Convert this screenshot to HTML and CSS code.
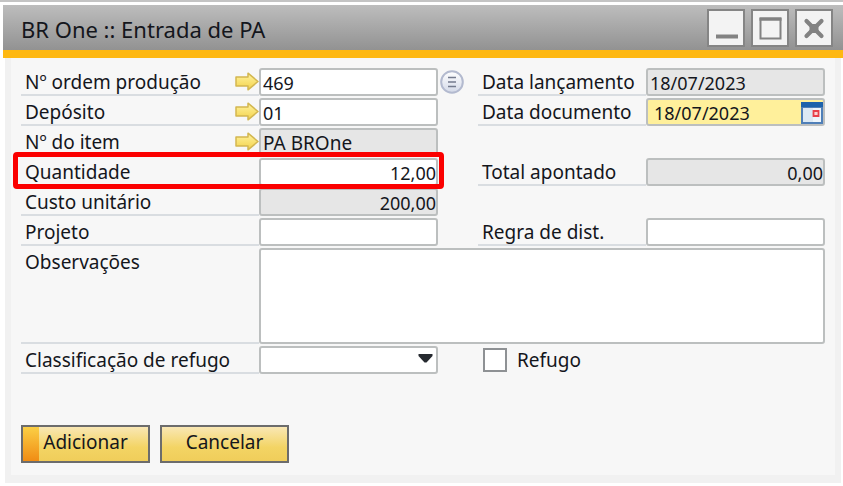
FILE: index.html
```
<!DOCTYPE html>
<html lang="pt-BR">
<head>
<meta charset="utf-8">
<meta name="viewport" content="width=device-width, initial-scale=1">
<title>BR One :: Entrada de PA</title>
<link rel="stylesheet" href="styles.css">
</head>
<body>
<svg class="defs" aria-hidden="true">
  <defs>
    <linearGradient id="gold" x1="0" y1="0" x2="0" y2="1">
      <stop offset="0" stop-color="#fff3a0"/>
      <stop offset="1" stop-color="#f3d24a"/>
    </linearGradient>
    <linearGradient id="disc" x1="0" y1="0" x2="0" y2="1">
      <stop offset="0" stop-color="#ffffff"/>
      <stop offset="1" stop-color="#d3d9e8"/>
    </linearGradient>
    <symbol id="arrow" viewBox="0 0 24 19">
      <path d="M1 5H13V1.200L23 9.500L13 17.800V14H1Z" fill="url(#gold)" stroke="#d3b750" stroke-width="1.500" stroke-linejoin="round"/>
    </symbol>
  </defs>
</svg>
<main class="window">
  <header class="titlebar">
    <h1 class="title">BR One :: Entrada de PA</h1>
    <div class="controls">
      <button class="control" type="button" aria-label="Minimizar"><svg viewBox="0 0 32 32"><path d="M6 24.500H28" stroke="#828282" stroke-width="4"/></svg></button>
      <button class="control" type="button" aria-label="Maximizar"><svg viewBox="0 0 32 32"><path d="M6.500 6V26.500H26.500V6" fill="none" stroke="#828282" stroke-width="2"/><path d="M5.500 7H27.500" stroke="#828282" stroke-width="3.500"/></svg></button>
      <button class="control" type="button" aria-label="Fechar"><svg viewBox="0 0 32 32"><path d="M8.500 9L23.500 24M23.500 9L8.500 24" stroke="#828282" stroke-width="4.200" stroke-linecap="round"/><path d="M11.500 12H20.500V21H11.500Z" fill="#828282"/></svg></button>
    </div>
  </header>
  <form class="panel">
    <div class="grid">
      <div class="label r1"><label for="ordem">Nº ordem produção</label><svg class="arrow" aria-hidden="true"><use href="#arrow"/></svg></div>
      <input class="field r1" id="ordem" type="text" value="469">
      <button class="pick r1" type="button" aria-label="Selecionar ordem"><svg viewBox="0 0 24 24"><circle cx="12" cy="12" r="10.800" fill="url(#disc)" stroke="#b3bacf" stroke-width="2"/><path d="M8 7.500H16M8 12H16M8 16.500H16" stroke="#747b8e" stroke-width="1.300"/></svg></button>
      <label class="label right r1" for="lancamento">Data lançamento</label>
      <input class="field right readonly r1" id="lancamento" type="text" value="18/07/2023" readonly>

      <div class="label r2"><label for="deposito">Depósito</label><svg class="arrow" aria-hidden="true"><use href="#arrow"/></svg></div>
      <input class="field r2" id="deposito" type="text" value="01">
      <label class="label right r2" for="documento">Data documento</label>
      <div class="field right date r2">
        <input class="date-input" id="documento" type="text" value="18/07/2023">
        <button class="calendar" type="button" aria-label="Abrir calendário"><svg viewBox="0 0 22 22"><path d="M0 0H22V22H0Z" fill="#4f7fb8"/><path d="M0 0H22V5H0Z" fill="#1d62ab"/><path d="M2 6H20V20H2Z" fill="#dce9f4"/><path d="M12 6H20V20H12Z" fill="#eef5fb"/><path d="M12.500 9H17.500V14H12.500Z" fill="#fbd3d3" stroke="#e8404a" stroke-width="1.800"/></svg></button>
      </div>

      <div class="label r3"><label for="item">Nº do item</label><svg class="arrow" aria-hidden="true"><use href="#arrow"/></svg></div>
      <input class="field readonly words r3" id="item" type="text" value="PA BROne" readonly>

      <label class="label r4" for="quantidade">Quantidade</label>
      <input class="field number r4" id="quantidade" type="text" value="12,00">
      <label class="label right r4" for="total">Total apontado</label>
      <input class="field right readonly number r4" id="total" type="text" value="0,00" readonly>
      <div class="highlight"></div>

      <label class="label r5" for="custo">Custo unitário</label>
      <input class="field readonly number r5" id="custo" type="text" value="200,00" readonly>

      <label class="label r6" for="projeto">Projeto</label>
      <input class="field r6" id="projeto" type="text">
      <label class="label right r6" for="regra">Regra de dist.</label>
      <input class="field right r6" id="regra" type="text">

      <label class="label r7" for="obs">Observações</label>
      <textarea class="field notes r7" id="obs"></textarea>

      <label class="label r8" for="classificacao">Classificação de refugo</label>
      <div class="select-box r8">
        <select class="field" id="classificacao"><option></option></select>
        <svg class="caret" viewBox="0 0 14 9" aria-hidden="true"><path d="M0 0H14V2L8 8.500H6L0 2Z" fill="#262a30"/></svg>
      </div>
      <label class="check r8"><input class="box" type="checkbox">Refugo</label>
    </div>
    <div class="actions">
      <button class="action primary" type="submit">Adicionar</button>
      <button class="action" type="button">Cancelar</button>
    </div>
  </form>
</main>
</body>
</html>
```
FILE: styles.css
```
* {
  box-sizing: border-box;
}

body {
  margin: 0;
  border-top: 2px solid #c4c4c4;
  background: #fff;
  color: #14161c;
  font: 19px/26px "Noto Sans", sans-serif;
}

.defs {
  position: absolute;
  width: 0;
  height: 0;
}

button,
input,
select,
textarea {
  margin: 0;
  color: inherit;
  font: inherit;
}

svg {
  display: block;
}

.window {
  padding-top: 3px;
}

.titlebar {
  display: flex;
  align-items: center;
  justify-content: space-between;
  height: 53px;
  margin-left: 3px;
  padding: 0 10px 0 18px;
  border-bottom: 8px solid #feb812;
  background: linear-gradient(#bdbdbd, #929292);
}

.title {
  margin: 0;
  padding-top: 2px;
  font-size: 22px;
  font-weight: 400;
  line-height: 32px;
}

.controls {
  display: flex;
  gap: 6px;
}

.control {
  width: 38px;
  height: 38px;
  padding: 1px;
  border: 2px solid #858585;
  background: #f3f3f3;
}

.panel {
  margin: 0 2px 0 5px;
  padding: 10px 10px 12px;
  border: 6px solid #f1f1f1;
  border-width: 0 6px 8px;
  background: #f7f7f7;
}

.grid {
  display: grid;
  grid-template-columns: 238px 1fr 40px 168px 1fr;
  grid-template-rows: repeat(6, 28px) 96px 28px;
  row-gap: 2px;
}

.r1 { grid-row: 1; }
.r2 { grid-row: 2; }
.r3 { grid-row: 3; }
.r4 { grid-row: 4; }
.r5 { grid-row: 5; }
.r6 { grid-row: 6; }
.r7 { grid-row: 7; }
.r8 { grid-row: 8; }

.label {
  grid-column: 1;
  display: flex;
  justify-content: space-between;
  padding: 1px 0 0 4px;
  border-bottom: 2px solid #d9dde1;
  white-space: nowrap;
}

.label.right {
  grid-column: 4;
}

.arrow {
  width: 24px;
  height: 19px;
  margin-top: 3px;
}

.field {
  grid-column: 2;
  width: 100%;
  min-width: 0;
  height: 28px;
  padding: 2px 2px 0;
  border: 2px solid #bcbfbf;
  border-radius: 3px;
  background: #fff;
  font-size: 18px;
}

.field.words {
  font-size: 19px;
}

.field.right {
  grid-column: 5;
}

.field.readonly {
  background: #e6e6e6;
}

.field.number {
  padding-right: 0;
  text-align: right;
}

.field.date {
  display: flex;
  padding: 0 0 0 6px;
  background: #fff09b;
}

.date-input {
  flex: 1;
  min-width: 0;
  padding: 2px 0 0;
  border: 0;
  background: none;
}

.calendar {
  width: 22px;
  height: 22px;
  margin-top: 2px;
  padding: 0;
  border: 0;
  background: none;
}

.pick {
  grid-column: 3;
  width: 24px;
  height: 24px;
  margin: 2px 0 0 2px;
  padding: 0;
  border: 0;
  background: none;
}

.highlight {
  z-index: 1;
  grid-area: 4 / 1 / 5 / 3;
  margin: -6px -6px -3px -8px;
  border: 5px solid #fb0000;
  border-radius: 4px;
  pointer-events: none;
}

.field.notes {
  grid-column: 2 / 6;
  height: 96px;
  resize: none;
}

.select-box {
  position: relative;
  grid-column: 2;
}

.select-box .field {
  display: block;
  appearance: none;
}

.caret {
  position: absolute;
  top: 8px;
  right: 5px;
  width: 15px;
  height: 9px;
  pointer-events: none;
}

.check {
  grid-column: 4 / 6;
  display: flex;
  align-items: center;
  gap: 10px;
  padding-left: 5px;
}

.box {
  width: 24px;
  height: 24px;
  border: 2px solid #8e9194;
  background: #fff;
  appearance: none;
}

.actions {
  display: flex;
  gap: 10px;
  margin-top: 51px;
}

.action {
  width: 129px;
  height: 38px;
  padding: 0 0 4px;
  border: 2px solid #6c6c6c;
  background: linear-gradient(#f9e7b4, #f3d464 60%, #f0cd5a);
}

.action.primary {
  background:
    linear-gradient(#fbcf45, #f08c14) left / 16px 100% no-repeat,
    linear-gradient(#f9e7b4, #f3d464 60%, #f0cd5a);
}
```
